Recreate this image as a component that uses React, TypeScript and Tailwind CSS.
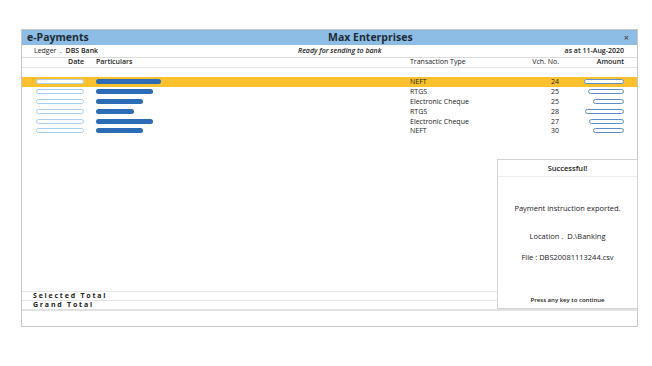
const rows = [
  { dateW: "w-[48px]", partW: "w-[65px]", type: "NEFT", vch: "24", amtW: "w-[40px]", active: true },
  { dateW: "w-[48px]", partW: "w-[57px]", type: "RTGS", vch: "25", amtW: "w-[36px]", active: false },
  { dateW: "w-[48px]", partW: "w-[47px]", type: "Electronic Cheque", vch: "25", amtW: "w-[31px]", active: false },
  { dateW: "w-[48px]", partW: "w-[38px]", type: "RTGS", vch: "28", amtW: "w-[39px]", active: false },
  { dateW: "w-[48px]", partW: "w-[57px]", type: "Electronic Cheque", vch: "27", amtW: "w-[35px]", active: false },
  { dateW: "w-[48px]", partW: "w-[47px]", type: "NEFT", vch: "30", amtW: "w-[31px]", active: false },
];

const App = () => {
  return (
    <div className="w-[652px] h-[366px] bg-white pt-[29px] pl-[21px] font-['Open_Sans',sans-serif] text-[#222]">
      <div className="relative w-[617px] h-[298px] border border-[#c9c9c9] flex flex-col">
        {/* Title bar */}
        <div className="h-[15px] bg-[#8dbde5] flex items-center px-[5px]">
          <div className="w-[301px] text-[10.5px] font-bold leading-none text-[#1d2a36]">e-Payments</div>
          <div className="text-[10.5px] font-bold leading-none text-[#1d2a36]">Max Enterprises</div>
          <div className="flex-1 text-right text-[9px] leading-none pr-[3px] text-[#333]">×</div>
        </div>

        {/* Ledger row */}
        <div className="h-[13px] flex items-center text-[7px] border-b border-[#dcdcdc] pl-[12px]">
          <div className="w-[264px]">Ledger&nbsp;&nbsp;.&nbsp;&nbsp;<span className="font-semibold">DBS Bank</span></div>
          <div className="italic font-semibold">Ready for sending to bank</div>
          <div className="flex-1 text-right pr-[13px] font-semibold">as at 11-Aug-2020</div>
        </div>

        {/* Column header */}
        <div className="h-[10px] flex items-center text-[7px] font-semibold border-b border-[#e6e6e6]">
          <div className="w-[62px] text-right">Date</div>
          <div className="w-[326px] pl-[12px]">Particulars</div>
          <div className="w-[100px] font-normal">Transaction Type</div>
          <div className="w-[49px] text-right font-normal">Vch. No.</div>
          <div className="w-[65px] text-right">Amount</div>
        </div>

        {/* Rows */}
        <div className="flex-1 flex flex-col pt-[9px]">
          {rows.map((r, i) => (
            <div
              key={i}
              className={
                "h-[9.8px] flex items-center text-[7px] " + (r.active ? "bg-[#fbc02d]" : "")
              }
            >
              <div className="w-[62px] flex justify-end">
                <div className={r.dateW + " h-[5px] rounded-full bg-white border border-[#a9cdee]"} />
              </div>
              <div className="w-[326px] pl-[12px]">
                <div className={r.partW + " h-[5px] rounded-full bg-[#2c6bb6]"} />
              </div>
              <div className="w-[100px] leading-none">{r.type}</div>
              <div className="w-[49px] text-right leading-none">{r.vch}</div>
              <div className="w-[65px] flex justify-end">
                <div className={r.amtW + " h-[5px] rounded-full bg-white border border-[#5d8fd0]"} />
              </div>
            </div>
          ))}
        </div>

        {/* Totals */}
        <div className="border-t border-[#e6e6e6] h-[9px] flex items-center pl-[11px] text-[7px] font-bold tracking-[1.8px]">
          Selected Total
        </div>
        <div className="border-t border-[#e6e6e6] h-[9px] flex items-center pl-[11px] text-[7px] font-bold tracking-[1.8px]">
          Grand Total
        </div>
        <div className="border-t-2 border-[#e2e2e2] h-[17px]" />

        {/* Success dialog */}
        <div className="absolute left-[475px] top-[129px] w-[141px] h-[150px] bg-white border border-[#d4d4d4] flex flex-col items-center text-[7.5px]">
          <div className="w-full h-[16px] flex items-center justify-center font-semibold border-b border-[#ececec] mt-[1px]">
            Successful!
          </div>
          <div className="mt-[26px]">Payment instruction exported.</div>
          <div className="mt-[17px]">Location&nbsp;.&nbsp;&nbsp;D.\Banking</div>
          <div className="mt-[9px]">File : DBS20081113244.csv</div>
          <div className="mt-auto mb-[3px] text-[6px] font-semibold">Press any key to continue</div>
        </div>
      </div>
    </div>
  );
};

export default App;
